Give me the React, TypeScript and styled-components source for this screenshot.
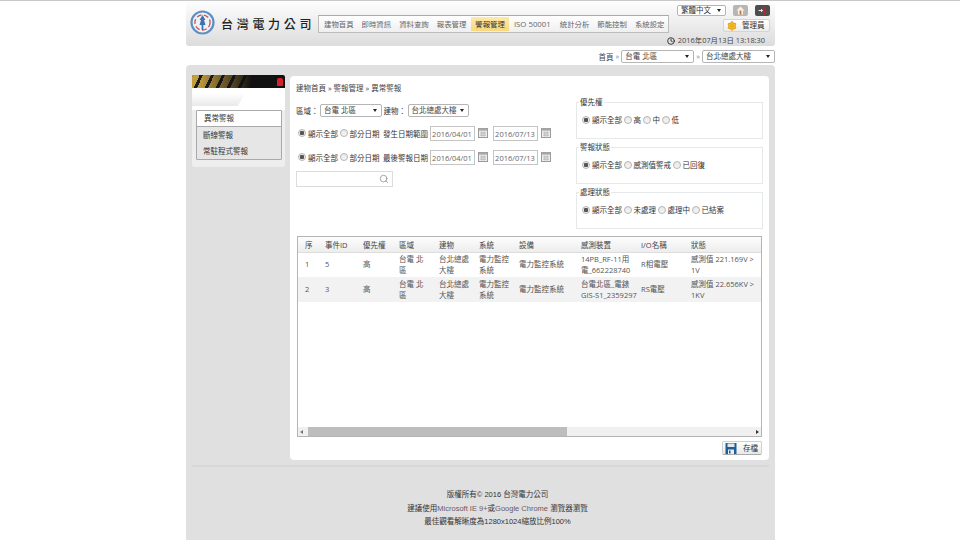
import React from 'react';
import styled, { createGlobalStyle } from 'styled-components';
import { Search, Clock, Settings } from 'lucide-react';

const FONT = '"Open Sans", "Noto Sans CJK TC", sans-serif';

const GlobalStyle = createGlobalStyle`
  html, body {
    margin: 0;
    padding: 0;
    height: 540px;
    overflow: hidden;
    background: #fff;
    font-family: ${FONT};
    font-size: 7.5px;
    color: #333;
  }
`;

const Page = styled.div`
  width: 589px;
  margin-left: 186px;
  display: flex;
  flex-direction: column;
  height: 540px;
`;
const TopLine = styled.div`
  position: fixed;
  left: 0;
  right: 0;
  top: 0;
  height: 1px;
  background: #c9c9c9;
`;

/* header */
const Header = styled.header`
  height: 44px;
  margin-top: 2px;
  flex: none;
  display: flex;
  background: linear-gradient(#fdfdfd, #dcdcdc);
  border-radius: 0 0 3px 3px;
  padding-left: 4px;
  position: relative;
  box-sizing: border-box;
`;
const LogoRow = styled.div`
  display: flex;
  align-items: flex-start;
  padding-top: 8px;
  width: 128px;
  flex: none;
`;
const CompanyName = styled.div`
  margin: 6px 0 0 6px;
  font-family: "Noto Sans CJK TC", sans-serif;
  font-size: 12px;
  font-weight: 500;
  letter-spacing: 3.7px;
  line-height: 16px;
  white-space: nowrap;
  color: #222;
`;
const Nav = styled.nav`
  margin-top: 13px;
  height: 18px;
  width: 351px;
  flex: none;
  box-sizing: border-box;
  border: 1px solid #bdbdbd;
  border-top-color: #aaa;
  background: linear-gradient(#fff, #efefef);
  display: flex;
  align-items: center;
  padding-left: 1px;
`;
const NavItem = styled.div<{ $active?: boolean; $latin?: boolean }>`
  height: 14px;
  line-height: 14px;
  padding: 0 ${({ $latin }) => ($latin ? 5 : 4)}px 0 4px;
  margin: 0 ${({ $active }) => ($active ? 1 : 0)}px;
  white-space: nowrap;
  font-size: ${({ $latin }) => ($latin ? 7.8 : 7.4)}px;
  color: ${({ $active }) => ($active ? '#333' : '#666')};
  background: ${({ $active }) => ($active ? 'linear-gradient(#fdeaa8, #f8d77c)' : 'transparent')};
`;
const Tools = styled.div`
  position: absolute;
  right: 5px;
  top: 3px;
  width: 94px;
  display: flex;
  flex-wrap: wrap;
  justify-content: flex-end;
`;
const LangSelect = styled.div`
  width: 49px;
  height: 11px;
  box-sizing: border-box;
  border: 1px solid #b5b5b5;
  border-radius: 2px;
  background: #fff;
  display: flex;
  align-items: center;
  justify-content: space-between;
  padding: 0 4px 0 3px;
  line-height: 9px;
`;
const Caret = styled.span`
  width: 0;
  height: 0;
  border: 2.5px solid transparent;
  border-top: 3px solid #222;
  border-bottom: 0;
`;
const IconButton = styled.div<{ $dark?: boolean }>`
  width: 15px;
  height: 11px;
  margin-left: 7px;
  border-radius: 2px;
  display: flex;
  align-items: center;
  justify-content: center;
  background: ${({ $dark }) => ($dark ? '#4d4d4d' : '#b9b5b0')};
`;
const AdminButton = styled.div`
  margin-top: 3px;
  width: 47px;
  height: 13px;
  box-sizing: border-box;
  border: 1px solid #d4d4d4;
  border-radius: 2px;
  background: linear-gradient(#fff, #ececec);
  display: flex;
  align-items: center;
  padding-left: 3px;
  gap: 5px;
  line-height: 11px;
`;
const DateLine = styled.div`
  position: absolute;
  right: 10px;
  top: 33px;
  display: flex;
  align-items: center;
  gap: 3px;
  font-size: 7.4px;
  line-height: 11px;
  color: #444;
`;

/* breadcrumb selects row */
const LocationRow = styled.div`
  height: 19px;
  flex: none;
  display: flex;
  align-items: center;
  justify-content: flex-end;
  color: #444;
  padding-top: 1px;
  box-sizing: border-box;
`;
const Picker = styled.div<{ $width: number }>`
  width: ${({ $width }) => $width}px;
  height: 13px;
  flex: none;
  box-sizing: border-box;
  border: 1px solid #b5b5b5;
  border-radius: 2px;
  background: #fff;
  display: flex;
  align-items: center;
  justify-content: space-between;
  padding: 0 4px 0 3px;
  line-height: 11px;
  white-space: nowrap;
  color: #444;
`;
const Sep = styled.span`
  color: #888;
  margin: 0 2px;
`;

/* main */
const Main = styled.main`
  flex: 1;
  background: #e0e0e0;
  border-radius: 4px 4px 0 0;
  display: flex;
  flex-direction: column;
`;
const Columns = styled.div`
  display: flex;
  padding: 10px 6px 0;
  gap: 5px;
`;
const Side = styled.aside`
  width: 93px;
  height: 92px;
  flex: none;
  background: #eeeeee;
  border-radius: 0 0 3px 3px;
`;
const SideBar = styled.div`
  height: 13px;
  border-radius: 2px 2px 0 0;
  background: #111;
  display: flex;
  align-items: center;
  justify-content: flex-end;
  padding-right: 2px;
  position: relative;
  overflow: hidden;
`;
const Stripes = styled.div`
  position: absolute;
  left: 0;
  top: 0;
  bottom: 0;
  width: 60px;
  background: repeating-linear-gradient(115deg, #c39d3a 0 7px, #1c1c1c 7px 10px);
  -webkit-mask-image: linear-gradient(90deg, #000 10%, transparent);
  mask-image: linear-gradient(90deg, #000 10%, transparent);
`;
const RedTab = styled.div`
  position: relative;
  width: 6px;
  height: 8px;
  background: #d8202a;
  border-radius: 2px 2px 0 0;
`;
const SideCurve = styled.div`
  height: 22px;
  background: #fff;
`;
const SideCurveShade = styled.div`
  height: 18px;
  width: 57px;
  background: linear-gradient(#fff 30%, #e9e9e9);
  clip-path: polygon(0 0, 100% 0, 80% 100%, 0 100%);
`;
const SideMenu = styled.div`
  margin: 0 3px 0 4px;
  box-sizing: border-box;
  border: 1px solid #a9a9a9;
  background: #e6e6e6;
  border-radius: 1px;
`;
const SideItem = styled.div<{ $active?: boolean }>`
  height: ${({ $active }) => ($active ? 15 : 16)}px;
  line-height: ${({ $active }) => ($active ? 15 : 16)}px;
  padding-left: ${({ $active }) => ($active ? 7 : 6)}px;
  background: ${({ $active }) => ($active ? '#fff' : 'transparent')};
  border-bottom: ${({ $active }) => ($active ? '1px solid #a9a9a9' : '0')};
  color: #333;
`;

const Content = styled.section`
  width: 479px;
  height: 384px;
  flex: none;
  margin-top: 1px;
  background: #fff;
  border-radius: 4px;
  padding: 7px 6px 0;
  box-sizing: border-box;
`;
const Filters = styled.div`
  display: flex;
  justify-content: space-between;
  height: 153px;
`;
const FilterLeft = styled.div`
  width: 270px;
  display: flex;
  flex-direction: column;
`;
const Crumbs = styled.div`
  line-height: 12px;
  color: #444;
  height: 12px;
  margin-top: -1px;
`;
const RegionRow = styled.div`
  display: flex;
  align-items: center;
  margin-top: 9px;
  height: 14px;
  color: #333;
  gap: 1.5px;
  white-space: nowrap;
`;
const DateRow = styled.div`
  display: flex;
  align-items: center;
  height: 16px;
  margin-top: 8px;
  padding-left: 2px;
  color: #333;
  white-space: nowrap;
`;
const Dot = styled.span<{ $on?: boolean }>`
  width: 8px;
  height: 8px;
  flex: none;
  box-sizing: border-box;
  border-radius: 50%;
  border: 1px solid #b4b4b4;
  background: ${({ $on }) => ($on ? 'radial-gradient(circle, #555 0 2px, #eee 2.5px)' : 'linear-gradient(#e8e8e8, #f6f6f6)')};
  margin-right: 2px;
`;
const RadioLabel = styled.span`
  margin-right: 1.5px;
`;
const RangeLabel = styled.span`
  margin: 0 1.5px 0 2px;
`;
const DateBox = styled.div`
  width: 45px;
  height: 15px;
  box-sizing: border-box;
  border: 1px solid #c4c4c4;
  text-align: center;
  line-height: 14px;
  color: #666;
`;
const CalWrap = styled.span`
  display: inline-flex;
  margin: 0 5px 0 3px;
`;
const SearchBox = styled.div`
  width: 97px;
  height: 16px;
  margin-top: 6px;
  box-sizing: border-box;
  border: 1px solid #dcdcdc;
  display: flex;
  align-items: center;
  justify-content: flex-end;
  padding-right: 3px;
  color: #888;
`;
const FilterRight = styled.div`
  width: 187px;
  display: flex;
  flex-direction: column;
  gap: 8px;
  margin-top: 19px;
`;
const Group = styled.div`
  height: 37px;
  box-sizing: border-box;
  border: 1px solid #e6e9ea;
  position: relative;
  display: flex;
  align-items: flex-start;
  padding: 12px 0 0 5px;
  line-height: 10px;
  white-space: nowrap;
`;
const GroupTitle = styled.div`
  position: absolute;
  left: 2px;
  top: -6px;
  background: #fff;
  line-height: 11px;
  padding: 0 1px;
  color: #333;
`;
const GroupOption = styled.span`
  display: inline-flex;
  align-items: center;
  margin-right: 1.5px;
`;

/* table */
const TableBox = styled.div`
  margin: 0 1px;
  height: 201px;
  width: 465px;
  box-sizing: border-box;
  border: 1px solid #b4b4b4;
  display: flex;
  flex-direction: column;
`;
const Table = styled.table`
  border-collapse: collapse;
  table-layout: fixed;
  width: 463px;
  color: #555;
  font-size: 7.5px;
`;
const Th = styled.th<{ $w: number }>`
  width: ${({ $w }) => $w}px;
  height: 15px;
  padding: 0 0 0 7px;
  box-sizing: border-box;
  text-align: left;
  font-weight: 400;
  background: linear-gradient(#fdfdfd, #ededed);
  border-bottom: 1px solid #ddd;
  white-space: nowrap;
  color: #444;
`;
const Row = styled.tr<{ $alt?: boolean }>`
  height: 25px;
  background: ${({ $alt }) => ($alt ? '#f2f2f2' : '#fff')};
`;
const Td = styled.td`
  padding: 0 2px 0 7px;
  line-height: 11px;
  word-break: break-all;
  vertical-align: middle;
`;
const DeviceCell = styled(Td)`
  padding-right: 0;
  white-space: pre;
`;
const StatusCell = styled(Td)`
  padding-right: 6px;
  word-break: normal;
`;
const Fill = styled.div`
  flex: 1;
`;
const ScrollTrack = styled.div`
  height: 9px;
  flex: none;
  background: #f0f0f0;
  display: flex;
  align-items: center;
  justify-content: space-between;
  padding: 0 2px;
  position: relative;
`;
const ScrollThumb = styled.div`
  position: absolute;
  left: 10px;
  top: 0;
  bottom: 0;
  background: #bdbdbd;
`;
const Arrow = styled.span<{ $left?: boolean }>`
  width: 0;
  height: 0;
  border: 2.5px solid transparent;
  border-left: ${({ $left }) => ($left ? '0' : '3px solid #333')};
  border-right: ${({ $left }) => ($left ? '3px solid #777' : '0')};
`;
const Actions = styled.div`
  display: flex;
  justify-content: flex-end;
  padding: 4px 1px 0 0;
`;
const SaveButton = styled.div`
  width: 40px;
  height: 14px;
  box-sizing: border-box;
  border: 1px solid #cfcfcf;
  border-bottom-color: #aaa;
  border-radius: 2px;
  background: linear-gradient(#fff, #e9e9e9);
  display: flex;
  align-items: center;
  gap: 6px;
  padding-left: 2px;
  line-height: 12px;
`;

/* footer */
const Footer = styled.footer`
  margin: 5px 6px 0;
  border-top: 2px solid #d8d8d8;
  padding: 21px 0 0 34px;
  text-align: center;
  font-family: "Liberation Sans", "Noto Sans CJK TC", sans-serif;
  font-size: 7.5px;
  line-height: 13.5px;
  color: #333;
`;
const Link = styled.span`
  color: #6a5a66;
`;

const NAV_ITEMS = ['建物首頁', '即時資訊', '資料查詢', '報表管理', '警報管理', 'ISO 50001', '統計分析', '節能控制', '系統設定'];

const COLS: [string, number][] = [
  ['序', 20],
  ['事件ID', 38],
  ['優先權', 36],
  ['區域', 40],
  ['建物', 40],
  ['系統', 40],
  ['設備', 62],
  ['感測裝置', 60],
  ['I/O名稱', 50],
  ['狀態', 77],
];

const ROWS = [
  ['1', '5', '高', '台電 北區', '台北總處大樓', '電力監控系統', '電力監控系統', '14PB_RF-11用\n電_662228740', 'R相電壓', '感測值 221.169V > 1V'],
  ['2', '3', '高', '台電 北區', '台北總處大樓', '電力監控系統', '電力監控系統', '台電北區_電錶\nGIS-S1_2359297', 'RS電壓', '感測值 22.656KV > 1KV'],
];

function Logo() {
  return (
    <svg width="25" height="25" viewBox="0 0 25 25">
      <circle cx="12.5" cy="12.5" r="11" fill="#eef2f7" stroke="#5f8fc2" strokeWidth="2.2" />
      <circle cx="12.5" cy="12.5" r="7.6" fill="none" stroke="#c9504d" strokeWidth="1.3" strokeDasharray="5 2.4" />
      <path d="M12.5 5 L15.5 10 L14 10 L15.5 15 L13.4 15 L13.4 20 L11.6 20 L11.6 15 L9.5 15 L11 10 L9.5 10 Z" fill="#3f74b0" />
    </svg>
  );
}

function HomeIcon() {
  return (
    <svg width="9" height="9" viewBox="0 0 9 9">
      <path d="M4.5 0.5 L8.5 4.5 L7 4.5 L7 8.5 L2 8.5 L2 4.5 L0.5 4.5 Z" fill="#f4f1ec" />
      <rect x="3.6" y="4.5" width="1.8" height="4" fill="#c9743c" />
    </svg>
  );
}

function ExitIcon() {
  return (
    <svg width="11" height="9" viewBox="0 0 11 9">
      <rect x="6" y="0.5" width="3" height="8" fill="#b3262f" />
      <path d="M1.5 4.5 H5.5 M4 3 L5.6 4.5 L4 6" fill="none" stroke="#e8e8e8" strokeWidth="1" />
    </svg>
  );
}

function Calendar() {
  return (
    <CalWrap>
      <svg width="10" height="10" viewBox="0 0 10 10">
        <rect x="0.5" y="0.5" width="9" height="9" fill="#eee" stroke="#9a9a9a" />
        <rect x="0.5" y="0.5" width="9" height="2.2" fill="#a8a8a8" />
        <path d="M2 4.5h6M2 6h6M2 7.5h6M3.5 3.5v5M5 3.5v5M6.5 3.5v5" stroke="#b5b5b5" strokeWidth="0.6" />
      </svg>
    </CalWrap>
  );
}

function SaveIcon() {
  return (
    <svg width="12" height="11" viewBox="0 0 12 11">
      <rect x="0.5" y="0" width="11" height="11" fill="#1f5f96" />
      <rect x="2.5" y="0.5" width="7" height="3.5" fill="#dfe8f0" />
      <rect x="3" y="6.5" width="6" height="4.5" fill="#e8eef3" />
      <rect x="4" y="7.5" width="1.5" height="3" fill="#1f5f96" />
    </svg>
  );
}

function DateFilter({ label, from, to }: { label: string; from: string; to: string }) {
  return (
    <DateRow>
      <Dot $on />
      <RadioLabel>顯示全部</RadioLabel>
      <Dot />
      <RadioLabel>部分日期</RadioLabel>
      <RangeLabel>{label}</RangeLabel>
      <DateBox>{from}</DateBox>
      <Calendar />
      <DateBox>{to}</DateBox>
      <Calendar />
    </DateRow>
  );
}

function RadioGroup({ title, options }: { title: string; options: string[] }) {
  return (
    <Group>
      <GroupTitle>{title}</GroupTitle>
      {options.map((option, i) => (
        <GroupOption key={option}>
          <Dot $on={i === 0} />
          {option}
        </GroupOption>
      ))}
    </Group>
  );
}

function TableCell({ column, value }: { column: number; value: string }) {
  if (column === 7) return <DeviceCell>{value}</DeviceCell>;
  if (column === 9) return <StatusCell>{value}</StatusCell>;
  return <Td>{value}</Td>;
}

export default function App() {
  return (
    <>
      <GlobalStyle />
      <TopLine />
      <Page>
        <Header>
          <LogoRow>
            <Logo />
            <CompanyName>台灣電力公司</CompanyName>
          </LogoRow>
          <Nav>
            {NAV_ITEMS.map((item) => (
              <NavItem key={item} $active={item === '警報管理'} $latin={item === 'ISO 50001'}>
                {item}
              </NavItem>
            ))}
          </Nav>
          <Tools>
            <LangSelect>
              繁體中文
              <Caret />
            </LangSelect>
            <IconButton>
              <HomeIcon />
            </IconButton>
            <IconButton $dark>
              <ExitIcon />
            </IconButton>
            <AdminButton>
              <Settings size={10} color="#e8a317" fill="#f5c230" strokeWidth={2.5} />
              管理員
            </AdminButton>
          </Tools>
          <DateLine>
            <Clock size={8} color="#222" strokeWidth={2.5} />
            2016年07月13日 13:18:30
          </DateLine>
        </Header>
        <LocationRow>
          首頁<Sep>»</Sep>
          <Picker $width={73}>
            台電 北區
            <Caret />
          </Picker>
          <Sep>»</Sep>
          <Picker $width={73}>
            台北總處大樓
            <Caret />
          </Picker>
        </LocationRow>
        <Main>
          <Columns>
            <Side>
              <SideBar>
                <Stripes />
                <RedTab />
              </SideBar>
              <SideCurve>
                <SideCurveShade />
              </SideCurve>
              <SideMenu>
                <SideItem $active>異常警報</SideItem>
                <SideItem>斷線警報</SideItem>
                <SideItem>常駐程式警報</SideItem>
              </SideMenu>
            </Side>
            <Content>
              <Filters>
                <FilterLeft>
                  <Crumbs>建物首頁 » 警報管理 » 異常警報</Crumbs>
                  <RegionRow>
                    區域：
                    <Picker $width={62}>
                      台電 北區
                      <Caret />
                    </Picker>
                    建物：
                    <Picker $width={61}>
                      台北總處大樓
                      <Caret />
                    </Picker>
                  </RegionRow>
                  <DateFilter label="發生日期範圍" from="2016/04/01" to="2016/07/13" />
                  <DateFilter label="最後警報日期" from="2016/04/01" to="2016/07/13" />
                  <SearchBox>
                    <Search size={10} strokeWidth={1.8} />
                  </SearchBox>
                </FilterLeft>
                <FilterRight>
                  <RadioGroup title="優先權" options={['顯示全部', '高', '中', '低']} />
                  <RadioGroup title="警報狀態" options={['顯示全部', '感測值警戒', '已回復']} />
                  <RadioGroup title="處理狀態" options={['顯示全部', '未處理', '處理中', '已結案']} />
                </FilterRight>
              </Filters>
              <TableBox>
                <Table>
                  <thead>
                    <tr>
                      {COLS.map(([name, w]) => (
                        <Th key={name} $w={w}>
                          {name}
                        </Th>
                      ))}
                    </tr>
                  </thead>
                  <tbody>
                    {ROWS.map((row, i) => (
                      <Row key={row[0]} $alt={i === 1}>
                        {row.map((cell, j) => (
                          <TableCell key={j} column={j} value={cell} />
                        ))}
                      </Row>
                    ))}
                  </tbody>
                </Table>
                <Fill />
                <ScrollTrack>
                  <ScrollThumb style={{ width: 259 }} />
                  <Arrow $left />
                  <Arrow />
                </ScrollTrack>
              </TableBox>
              <Actions>
                <SaveButton>
                  <SaveIcon />
                  存檔
                </SaveButton>
              </Actions>
            </Content>
          </Columns>
          <Footer>
            <div>版權所有© 2016 台灣電力公司</div>
            <div>
              建議使用<Link>Microsoft IE 9+</Link>或<Link>Google Chrome</Link> 瀏覽器瀏覽
            </div>
            <div>最佳觀看解晰度為1280x1024縮放比例100%</div>
          </Footer>
        </Main>
      </Page>
    </>
  );
}
